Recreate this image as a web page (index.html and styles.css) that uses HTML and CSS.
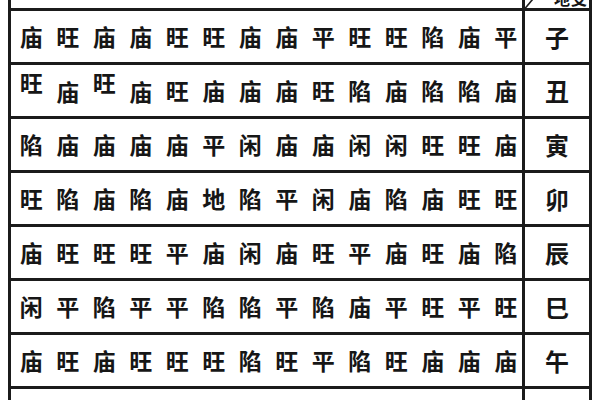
FILE: index.html
```html
<!DOCTYPE html>
<html lang="zh-CN">
<head>
<meta charset="utf-8">
<title>庙旺表</title>
<link rel="stylesheet" href="styles.css">
</head>
<body>
<div class="sheet">
  <div class="row head">
    <div class="cells"></div>
    <div class="branch headcell">
      <svg class="diag" width="10" height="8" viewBox="0 0 10 8"><line x1="0" y1="8.5" x2="7.5" y2="-0.5" stroke="#1b1b1b" stroke-width="1.6"/></svg>
      <span class="headtext">地支</span>
    </div>
  </div>
  <div class="row">
    <div class="cells"><span>庙</span><span>旺</span><span>庙</span><span>庙</span><span>旺</span><span>旺</span><span>庙</span><span>庙</span><span>平</span><span>旺</span><span>旺</span><span>陷</span><span>庙</span><span>平</span></div>
    <div class="branch">子</div>
  </div>
  <div class="row">
    <div class="cells"><span class="up">旺</span><span class="down">庙</span><span class="up">旺</span><span class="down">庙</span><span>旺</span><span>庙</span><span>庙</span><span>庙</span><span>旺</span><span>陷</span><span>庙</span><span>陷</span><span>陷</span><span>庙</span></div>
    <div class="branch">丑</div>
  </div>
  <div class="row">
    <div class="cells"><span>陷</span><span>庙</span><span>庙</span><span>庙</span><span>庙</span><span>平</span><span>闲</span><span>庙</span><span>庙</span><span>闲</span><span>闲</span><span>旺</span><span>旺</span><span>庙</span></div>
    <div class="branch">寅</div>
  </div>
  <div class="row">
    <div class="cells"><span>旺</span><span>陷</span><span>庙</span><span>陷</span><span>庙</span><span>地</span><span>陷</span><span>平</span><span>闲</span><span>庙</span><span>陷</span><span>庙</span><span>旺</span><span>旺</span></div>
    <div class="branch">卯</div>
  </div>
  <div class="row">
    <div class="cells"><span>庙</span><span>旺</span><span>旺</span><span>旺</span><span>平</span><span>庙</span><span>闲</span><span>庙</span><span>旺</span><span>平</span><span>庙</span><span>旺</span><span>庙</span><span>陷</span></div>
    <div class="branch">辰</div>
  </div>
  <div class="row">
    <div class="cells"><span>闲</span><span>平</span><span>陷</span><span>平</span><span>平</span><span>陷</span><span>陷</span><span>平</span><span>陷</span><span>庙</span><span>平</span><span>旺</span><span>平</span><span>旺</span></div>
    <div class="branch">巳</div>
  </div>
  <div class="row">
    <div class="cells"><span>庙</span><span>旺</span><span>庙</span><span>旺</span><span>旺</span><span>旺</span><span>陷</span><span>旺</span><span>平</span><span>陷</span><span>旺</span><span>庙</span><span>庙</span><span>庙</span></div>
    <div class="branch">午</div>
  </div>
  <div class="row">
    <div class="cells"></div>
    <div class="branch"></div>
  </div>
</div>
</body>
</html>
```

FILE: styles.css
```css
html, body {
  margin: 0;
  padding: 0;
  background: #ffffff;
  overflow: hidden;
}

body {
  width: 600px;
  height: 400px;
  font-family: "Noto Sans CJK SC", "Noto Sans CJK JP", sans-serif;
  color: #161616;
}

.sheet {
  margin-left: 8px;
  width: 584px;
  box-sizing: border-box;
  border-left: 3px solid #1b1b1b;
  border-right: 3px solid #1b1b1b;
}

.row {
  display: grid;
  grid-template-columns: 511px 67px;
  grid-template-rows: minmax(0, 1fr);
  height: 54px;
  box-sizing: border-box;
  border-top: 3px solid #1b1b1b;
}

.row.head {
  height: 8px;
  border-top: none;
}

.cells {
  display: flex;
  align-items: center;
  padding-left: 2px;
  font-size: 23px;
  font-weight: 700;
  line-height: 1;
}

.cells span {
  width: 36.5px;
  flex: none;
  text-align: center;
}

.cells span.up {
  transform: translateY(-8px);
}

.cells span.down {
  transform: translateY(1px);
}

.branch {
  border-left: 3px solid #1b1b1b;
  display: flex;
  align-items: center;
  justify-content: center;
  font-size: 24px;
  font-weight: 700;
  line-height: 1;
}

.headcell {
  min-height: 0;
  justify-content: space-between;
  align-items: flex-end;
}

.diag {
  display: block;
  flex: none;
}

.headtext {
  font-size: 16px;
  line-height: 16px;
  margin-right: 1px;
  margin-bottom: 2.5px;
  letter-spacing: 1px;
}
```
